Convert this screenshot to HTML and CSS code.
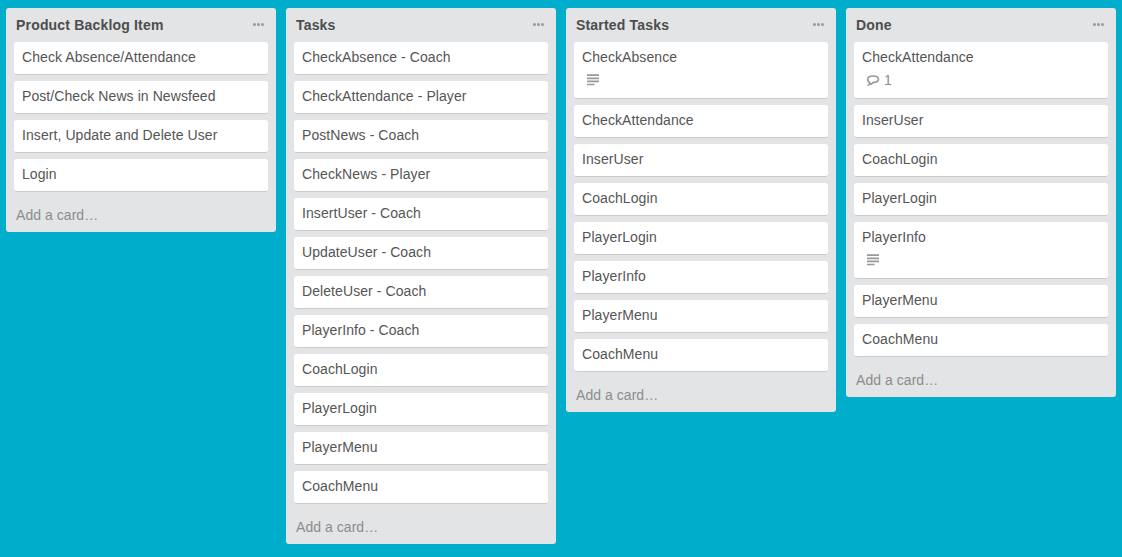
FILE: index.html
```html
<!DOCTYPE html>
<html lang="en">
<head>
<meta charset="utf-8">
<title>Board</title>
<link rel="stylesheet" href="styles.css">
</head>
<body>
<main class="board">
  <section class="list">
    <header class="list-header"><h2>Product Backlog Item</h2><span class="menu"><i></i><i></i><i></i></span></header>
    <div class="cards">
      <article class="card">Check Absence/Attendance</article>
      <article class="card">Post/Check News in Newsfeed</article>
      <article class="card">Insert, Update and Delete User</article>
      <article class="card">Login</article>
    </div>
    <footer class="add">Add a card…</footer>
  </section>
  <section class="list">
    <header class="list-header"><h2>Tasks</h2><span class="menu"><i></i><i></i><i></i></span></header>
    <div class="cards">
      <article class="card">CheckAbsence - Coach</article>
      <article class="card">CheckAttendance - Player</article>
      <article class="card">PostNews - Coach</article>
      <article class="card">CheckNews - Player</article>
      <article class="card">InsertUser - Coach</article>
      <article class="card">UpdateUser - Coach</article>
      <article class="card">DeleteUser - Coach</article>
      <article class="card">PlayerInfo - Coach</article>
      <article class="card">CoachLogin</article>
      <article class="card">PlayerLogin</article>
      <article class="card">PlayerMenu</article>
      <article class="card">CoachMenu</article>
    </div>
    <footer class="add">Add a card…</footer>
  </section>
  <section class="list">
    <header class="list-header"><h2>Started Tasks</h2><span class="menu"><i></i><i></i><i></i></span></header>
    <div class="cards">
      <article class="card">CheckAbsence
        <div class="badges"><svg class="icon" viewBox="0 0 14 12"><path d="M1 1.200h12M1 4.300h12M1 7.400h12M1 10.500h7.500"/></svg></div>
      </article>
      <article class="card">CheckAttendance</article>
      <article class="card">InserUser</article>
      <article class="card">CoachLogin</article>
      <article class="card">PlayerLogin</article>
      <article class="card">PlayerInfo</article>
      <article class="card">PlayerMenu</article>
      <article class="card">CoachMenu</article>
    </div>
    <footer class="add">Add a card…</footer>
  </section>
  <section class="list">
    <header class="list-header"><h2>Done</h2><span class="menu"><i></i><i></i><i></i></span></header>
    <div class="cards">
      <article class="card">CheckAttendance
        <div class="badges"><svg class="icon" viewBox="0 0 14 12"><path d="M3.800 8.700C2.300 7.900 1.700 6.800 1.700 5.500C1.700 3.400 4 2 7.200 2S12.400 3.200 12.400 5.200S10.200 8.400 7.200 8.400C6.200 9.700 4.800 10.400 3 10.600C3.700 10 3.900 9.500 3.800 8.700Z"/></svg><span>1</span></div>
      </article>
      <article class="card">InserUser</article>
      <article class="card">CoachLogin</article>
      <article class="card">PlayerLogin</article>
      <article class="card">PlayerInfo
        <div class="badges"><svg class="icon" viewBox="0 0 14 12"><path d="M1 1.200h12M1 4.300h12M1 7.400h12M1 10.500h7.500"/></svg></div>
      </article>
      <article class="card">PlayerMenu</article>
      <article class="card">CoachMenu</article>
    </div>
    <footer class="add">Add a card…</footer>
  </section>
</main>
</body>
</html>
```
FILE: styles.css
```css
* { box-sizing: border-box; }
body {
  margin: 0;
  height: 557px;
  overflow: hidden;
  background: #00aecc;
  color: #4d4d4d;
  font: 14px/18px "Liberation Sans", Arial, sans-serif;
}
.board { display: flex; align-items: flex-start; gap: 10px; padding: 8px 6px; }
.list { flex: 0 0 270px; background: #e2e4e6; border-radius: 3px; }
.list-header {
  display: flex;
  justify-content: space-between;
  height: 34px;
  padding: 8px 12px 0 10px;
}
.list-header h2 {
  margin: 0;
  font-size: 14px;
  line-height: 18px;
  font-weight: bold;
  letter-spacing: 0.18px;
}
.menu { display: flex; gap: 1px; padding-top: 7px; }
.menu i { width: 3px; height: 3px; border-radius: 1.5px; background: #999; }
.cards { display: flex; flex-direction: column; gap: 6px; padding: 0 8px; }
.card {
  min-height: 33px;
  padding: 6px 8px 8px;
  background: #fff;
  border-bottom: 1px solid #c9cbcd;
  border-radius: 3px;
  color: #555;
  letter-spacing: 0.08px;
}
.badges {
  display: flex;
  align-items: center;
  height: 18px;
  margin: 5px 0 1px 4px;
  gap: 4px;
  color: #8c8c8c;
}
.icon { width: 14px; height: 12px; fill: none; stroke: #999; stroke-width: 1.7; }
.add { height: 40px; padding: 14px 10px 0; color: #8c8c8c; letter-spacing: 0.05px; }
```
